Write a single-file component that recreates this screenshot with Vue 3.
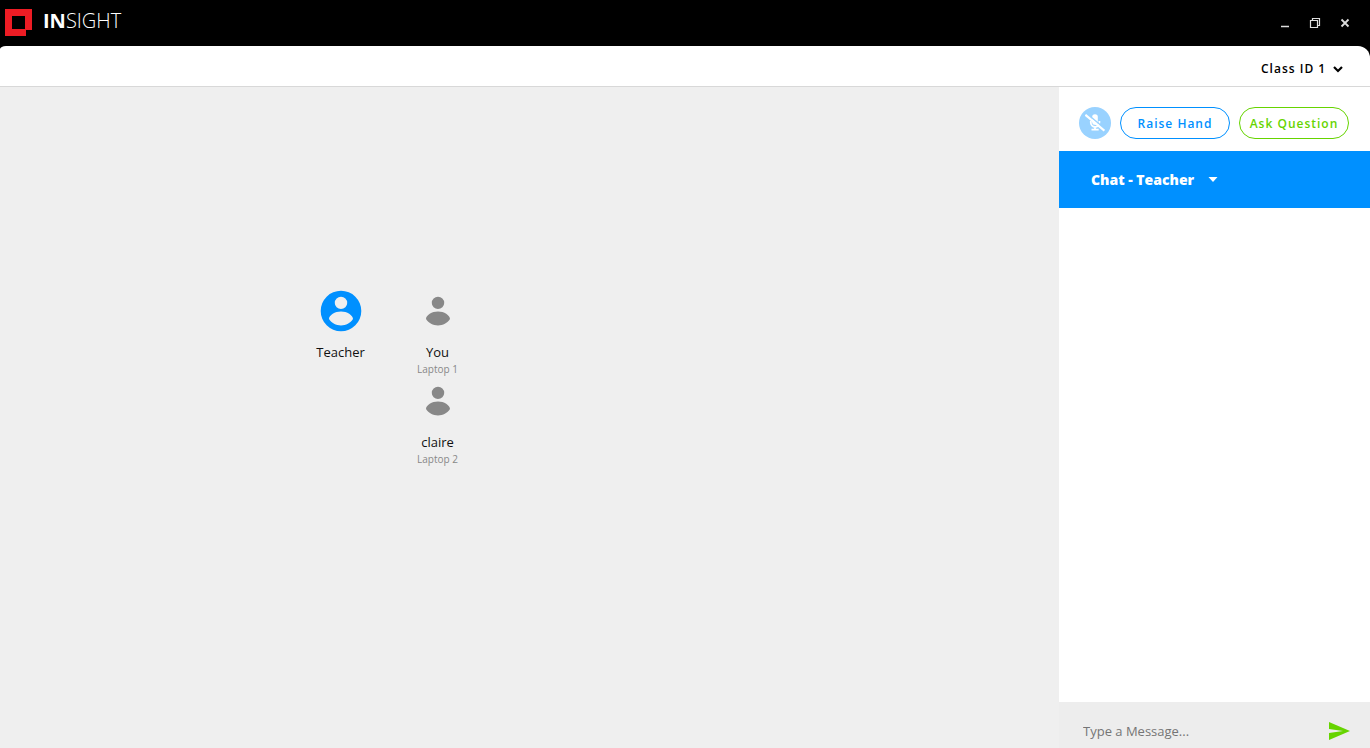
<script setup>
import { ref } from 'vue'

const classes = ref(['Class ID 1'])
const selectedClass = ref('Class ID 1')
const message = ref('')

const columns = ref([
    [{ name: 'Teacher', role: 'teacher' }],
    [
        { name: 'You', role: 'student', device: 'Laptop 1' },
        { name: 'claire', role: 'student', device: 'Laptop 2' }
    ]
])

function sendMessage() {
    message.value = ''
}
</script>

<template>
    <div class="app">
        <header class="title-bar">
            <svg class="logo" width="27" height="27" viewBox="0 0 27 27">
                <path fill="#ed1c24" fill-rule="evenodd" d="M0 0h27v21h-6v6H0zM7 7v13h13V7z" />
            </svg>
            <span class="brand"><b>IN</b>SIGHT</span>
            <div class="window-controls">
                <button type="button" aria-label="Minimize">
                    <svg width="12" height="12" viewBox="0 0 12 12">
                        <path stroke-width="1.5" d="M2 9.5h8" />
                    </svg>
                </button>
                <button type="button" aria-label="Restore">
                    <svg width="12" height="12" viewBox="0 0 12 12">
                        <path stroke-width="1.2" d="M1.5 3.500h7v7h-7zM3.500 3.500v-2h7v7h-2" />
                    </svg>
                </button>
                <button type="button" aria-label="Close">
                    <svg width="12" height="12" viewBox="0 0 12 12">
                        <path stroke-width="1.8" d="M2.500 2.500l7 7M9.500 2.500l-7 7" />
                    </svg>
                </button>
            </div>
        </header>

        <div class="toolbar">
            <label class="class-picker">
                <select v-model="selectedClass" aria-label="Class">
                    <option v-for="item in classes" :key="item">{{ item }}</option>
                </select>
                <svg width="10" height="8" viewBox="0 0 10 8">
                    <path fill="none" stroke="#000" stroke-width="2.2" d="M1 2l4 4 4-4" />
                </svg>
            </label>
        </div>

        <div class="content">
            <main class="board">
                <div v-for="(column, index) in columns" :key="index" class="column">
                    <div v-for="person in column" :key="person.name" class="person">
                        <svg v-if="person.role === 'teacher'" width="48" height="48" viewBox="0 0 24 24">
                            <path fill="#0090ff"
                                d="M12 1.850a10.150 10.150 0 1 0 0 20.300 10.150 10.150 0 0 0 0-20.300zm0 3a3.100 3.100 0 1 1 0 6.200 3.100 3.100 0 0 1 0-6.200zm0 14.400c-2.500 0-4.710-1.280-6-3.220.030-1.990 3-3.780 6-3.780s5.970 1.790 6 3.780c-1.290 1.940-3.500 3.220-6 3.220z" />
                        </svg>
                        <svg v-else width="48" height="48" viewBox="0 0 24 24">
                            <path fill="#888"
                                d="M12 4.850a3.100 3.100 0 1 1 0 6.200 3.100 3.100 0 0 1 0-6.200zm0 14.400c-2.500 0-4.710-1.280-6-3.220.030-1.990 3-3.780 6-3.780s5.970 1.790 6 3.780c-1.290 1.940-3.500 3.220-6 3.220z" />
                        </svg>
                        <span class="name">{{ person.name }}</span>
                        <span v-if="person.device" class="device">{{ person.device }}</span>
                    </div>
                </div>
            </main>

            <aside class="sidebar">
                <div class="actions">
                    <button type="button" class="mic" aria-label="Unmute microphone">
                        <svg width="20" height="20" viewBox="0 0 20 20">
                            <rect x="7.2" y="1.2" width="5.600" height="10.500" rx="2.800" fill="#fff" />
                            <path fill="none" stroke="#fff" stroke-width="1.800"
                                d="M5.800 8v1.500a4.300 4.300 0 0 0 8.600 0V8M10 13.500v3M6.500 16.600h7.200" />
                            <path stroke="#99d2ff" stroke-width="1.400" d="M1.500 .4l18 15" />
                            <path stroke="#fff" stroke-width="2.200" d="M.4 1.800l19 15.800" />
                        </svg>
                    </button>
                    <button type="button" class="pill raise">Raise Hand</button>
                    <button type="button" class="pill ask">Ask Question</button>
                </div>
                <button type="button" class="chat-header">
                    <span>Chat - Teacher</span>
                    <svg width="10" height="5" viewBox="0 0 10 5">
                        <path fill="#fff" d="M.5 0h9L5 5z" />
                    </svg>
                </button>
                <div class="messages"></div>
                <form class="composer" @submit.prevent="sendMessage">
                    <input v-model="message" type="text" placeholder="Type a Message..." aria-label="Message">
                    <button type="submit" aria-label="Send">
                        <svg width="21" height="18" viewBox="0 0 21 18">
                            <path fill="#66d400" d="M0 0l21 9L0 18v-7l14-2L0 7z" />
                        </svg>
                    </button>
                </form>
            </aside>
        </div>
    </div>
</template>

<style>
body {
    margin: 0;
    background-color: #000;
}
</style>

<style scoped>
.app {
    display: flex;
    flex-direction: column;
    height: 100vh;
    font-family: "Open Sans", "Noto Sans", sans-serif;
    color: #111;
}

.app * {
    box-sizing: border-box;
}

button,
input,
select {
    margin: 0;
    padding: 0;
    border: 0;
    background: none;
    font-family: inherit;
}

button {
    cursor: pointer;
}

svg {
    display: block;
    flex-shrink: 0;
}

.title-bar {
    display: flex;
    align-items: center;
    height: 46px;
    padding: 0 20px 1px 5px;
    background-color: #000;
}

.brand {
    margin-left: 11px;
    padding-bottom: 3px;
    color: #fff;
    font-size: 20px;
    font-weight: 300;
    line-height: 24px;
}

.brand b {
    font-weight: 700;
}

.window-controls {
    display: flex;
    gap: 20px;
    margin-left: auto;
}

.window-controls button {
    width: 10px;
    display: flex;
    justify-content: center;
}

.window-controls path {
    fill: none;
    stroke: #ddd;
}

.toolbar {
    display: flex;
    align-items: center;
    justify-content: flex-end;
    height: 41px;
    padding: 6px 27px 0 0;
    border-bottom: 1px solid #d8d8d8;
    border-radius: 6px 12px 0 0 / 3px 12px 0 0;
    background-color: #fff;
}

.class-picker {
    display: flex;
    align-items: center;
    gap: 6px;
}

.class-picker select {
    appearance: none;
    color: #000;
    font-size: 12px;
    font-weight: 600;
    letter-spacing: 1px;
    line-height: 20px;
}

.content {
    display: flex;
    flex: 1;
    min-height: 0;
}

.board {
    display: flex;
    flex: 1;
    padding: 200px 0 0 292px;
    background-color: #efefef;
}

.column {
    width: 97px;
}

.person {
    display: flex;
    flex-direction: column;
    align-items: center;
    height: 90px;
}

.name {
    margin-top: 7px;
    font-size: 13px;
    line-height: 20px;
}

.device {
    color: #888;
    font-size: 10px;
    line-height: 15px;
}

.sidebar {
    display: flex;
    flex-direction: column;
    width: 311px;
    background-color: #fff;
}

.actions {
    display: flex;
    align-items: center;
    gap: 9px;
    height: 64px;
    padding: 8px 21px 0 20px;
}

.mic {
    display: flex;
    align-items: center;
    justify-content: center;
    width: 32px;
    height: 32px;
    border-radius: 50%;
    background-color: #99d2ff;
}

.pill {
    flex: 1;
    height: 32px;
    border: 1px solid;
    border-radius: 16px;
    font-size: 12px;
    font-weight: 600;
    letter-spacing: 1px;
    white-space: nowrap;
}

.raise {
    color: #0090ff;
}

.ask {
    color: #66d400;
}

.chat-header {
    display: flex;
    align-items: center;
    gap: 14px;
    height: 57px;
    padding: 0 32px;
    background-color: #0090ff;
    color: #fff;
    font-size: 14px;
    font-weight: 800;
}

.messages {
    flex: 1;
}

.composer {
    display: flex;
    align-items: center;
    height: 46px;
    padding: 11px 20px 0 24px;
    background-color: #ededed;
}

.composer input {
    flex: 1;
    min-width: 0;
    outline: none;
    font-size: 13px;
    line-height: 20px;
}

.composer input::placeholder {
    color: #757575;
}
</style>
